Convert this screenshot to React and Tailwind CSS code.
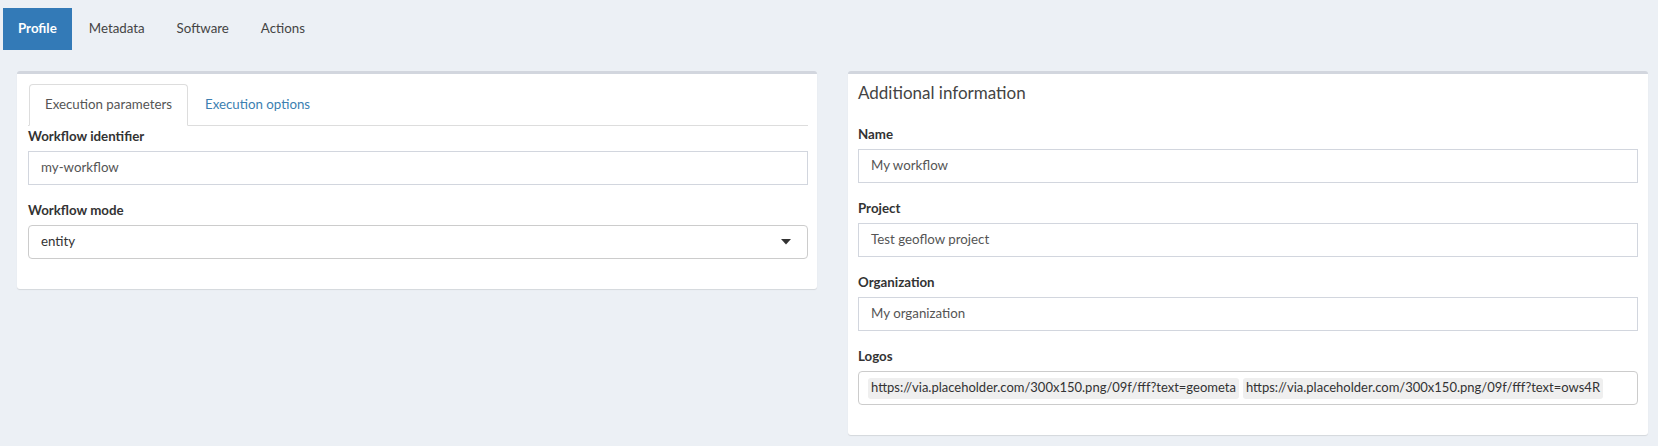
import React from "react";

const font = { fontFamily: '"Source Sans Pro", Lato, "Noto Sans", sans-serif' };

function Field({ label, value, last }) {
  return (
    <div className={last ? "" : "mb-[15px]"}>
      <div className="text-[13.3px] font-bold text-[#333] leading-[20px] mb-[5px]">{label}</div>
      <div className="h-[34px] border border-[#d2d6de] bg-white px-[12px] flex items-center text-[13.3px] text-[#555]">
        {value}
      </div>
    </div>
  );
}

export default function App() {
  return (
    <div className="min-h-[446px] bg-[#ecf0f5]" style={font}>
      <div className="flex pt-[8px] pl-[3px] h-[50px] box-content">
        <div className="h-[42px] px-[15px] flex items-center bg-[#337ab7] text-white font-bold text-[13.3px]">Profile</div>
        <div className="h-[42px] px-[15px] ml-[2px] flex items-center text-[#444] text-[13.3px]">Metadata</div>
        <div className="h-[42px] px-[15px] ml-[2px] flex items-center text-[#444] text-[13.3px]">Software</div>
        <div className="h-[42px] px-[15px] ml-[2px] flex items-center text-[#444] text-[13.3px]">Actions</div>
      </div>
      <div className="flex items-start pl-[17px] pt-[13px] gap-[31px]">
        <div className="w-[800px] bg-white border-t-[3px] border-[#d2d6de] rounded-[3px] shadow-[0_1px_1px_rgba(0,0,0,0.1)] pt-[10px] pl-[11px] pr-[9px] pb-[30px]">
          <div className="flex border-b border-[#ddd] h-[42px]">
            <div className="h-[42px] px-[15px] flex items-center border border-[#ddd] border-b-white rounded-t-[4px] bg-white text-[#555] text-[13.3px] ml-[1px]">
              Execution parameters
            </div>
            <div className="h-[41px] px-[15px] ml-[2px] flex items-center text-[#3c7fb1] text-[13.3px]">Execution options</div>
          </div>
          <Field label="Workflow identifier" value="my-workflow" />
          <div>
            <div className="text-[13.3px] font-bold text-[#333] leading-[20px] mb-[5px]">Workflow mode</div>
            <div className="h-[34px] border border-[#ccc] rounded-[4px] bg-white pl-[12px] pr-[16px] flex items-center justify-between text-[13.3px] text-[#333]">
              <span>entity</span>
              <svg width="10" height="6" viewBox="0 0 10 6"><path d="M0 0 L10 0 L5 5.5 Z" fill="#333" /></svg>
            </div>
          </div>
        </div>
        <div className="w-[800px] bg-white border-t-[3px] border-[#d2d6de] rounded-[3px] shadow-[0_1px_1px_rgba(0,0,0,0.1)]">
          <div className="px-[10px] pt-[10px] pb-[10px]">
            <div className="text-[17px] leading-[18px] text-[#444]">Additional information</div>
          </div>
          <div className="px-[10px] pt-[12px] pb-[30px]">
            <Field label="Name" value="My workflow" />
            <Field label="Project" value="Test geoflow project" />
            <Field label="Organization" value="My organization" />
            <div>
              <div className="text-[13.3px] font-bold text-[#333] leading-[20px] mb-[5px]">Logos</div>
              <div className="h-[34px] border border-[#ccc] rounded-[4px] bg-white px-[9px] flex items-center gap-[4px] text-[13px] text-[#333] whitespace-nowrap overflow-hidden">
                <span className="bg-[#efefef] rounded-[3px] px-[3px] h-[21px] flex items-center">https://via.placeholder.com/300x150.png/09f/fff?text=geometa</span>
                <span className="bg-[#efefef] rounded-[3px] px-[3px] h-[21px] flex items-center">https://via.placeholder.com/300x150.png/09f/fff?text=ows4R</span>
              </div>
            </div>
          </div>
        </div>
      </div>
    </div>
  );
}
